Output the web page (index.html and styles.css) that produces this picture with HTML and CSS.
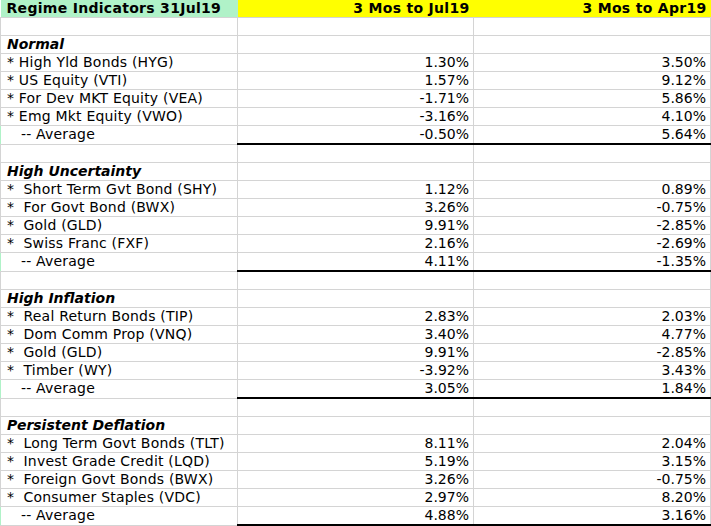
FILE: index.html
```html
<!DOCTYPE html>
<html>
<head>
<meta charset="utf-8">
<link rel="stylesheet" href="styles.css">
</head>
<body>
<table class="sheet">
<colgroup><col class="c1"><col class="c2"><col class="c3"></colgroup>
<tr class="head"><td class="h1">Regime Indicators 31Jul19</td><td class="h2 num">3 Mos to Jul19</td><td class="h2 num">3 Mos to Apr19</td></tr>
<tr><td></td><td></td><td></td></tr>
<tr><td class="grp">Normal</td><td></td><td></td></tr>
<tr><td class="lbl">* High Yld Bonds (HYG)</td><td class="num">1.30%</td><td class="num">3.50%</td></tr>
<tr><td class="lbl">* US Equity (VTI)</td><td class="num">1.57%</td><td class="num">9.12%</td></tr>
<tr><td class="lbl">* For Dev MKT Equity (VEA)</td><td class="num">-1.71%</td><td class="num">5.86%</td></tr>
<tr><td class="lbl">* Emg Mkt Equity (VWO)</td><td class="num">-3.16%</td><td class="num">4.10%</td></tr>
<tr class="avg"><td class="lbl">   -- Average</td><td class="num">-0.50%</td><td class="num">5.64%</td></tr>
<tr><td></td><td></td><td></td></tr>
<tr><td class="grp">High Uncertainty</td><td></td><td></td></tr>
<tr><td class="lbl">*  Short Term Gvt Bond (SHY)</td><td class="num">1.12%</td><td class="num">0.89%</td></tr>
<tr><td class="lbl">*  For Govt Bond (BWX)</td><td class="num">3.26%</td><td class="num">-0.75%</td></tr>
<tr><td class="lbl">*  Gold (GLD)</td><td class="num">9.91%</td><td class="num">-2.85%</td></tr>
<tr><td class="lbl">*  Swiss Franc (FXF)</td><td class="num">2.16%</td><td class="num">-2.69%</td></tr>
<tr class="avg"><td class="lbl">   -- Average</td><td class="num">4.11%</td><td class="num">-1.35%</td></tr>
<tr><td></td><td></td><td></td></tr>
<tr><td class="grp">High Inflation</td><td></td><td></td></tr>
<tr><td class="lbl">*  Real Return Bonds (TIP)</td><td class="num">2.83%</td><td class="num">2.03%</td></tr>
<tr><td class="lbl">*  Dom Comm Prop (VNQ)</td><td class="num">3.40%</td><td class="num">4.77%</td></tr>
<tr><td class="lbl">*  Gold (GLD)</td><td class="num">9.91%</td><td class="num">-2.85%</td></tr>
<tr><td class="lbl">*  Timber (WY)</td><td class="num">-3.92%</td><td class="num">3.43%</td></tr>
<tr class="avg"><td class="lbl">   -- Average</td><td class="num">3.05%</td><td class="num">1.84%</td></tr>
<tr><td></td><td></td><td></td></tr>
<tr><td class="grp">Persistent Deflation</td><td></td><td></td></tr>
<tr><td class="lbl">*  Long Term Govt Bonds (TLT)</td><td class="num">8.11%</td><td class="num">2.04%</td></tr>
<tr><td class="lbl">*  Invest Grade Credit (LQD)</td><td class="num">5.19%</td><td class="num">3.15%</td></tr>
<tr><td class="lbl">*  Foreign Govt Bonds (BWX)</td><td class="num">3.26%</td><td class="num">-0.75%</td></tr>
<tr><td class="lbl">*  Consumer Staples (VDC)</td><td class="num">2.97%</td><td class="num">8.20%</td></tr>
<tr class="avg"><td class="lbl">   -- Average</td><td class="num">4.88%</td><td class="num">3.16%</td></tr>
</table>
</body>
</html>
```
FILE: styles.css
```css
html, body {
  margin: 0;
  padding: 0;
  background: #ffffff;
}
.sheet {
  border-collapse: collapse;
  table-layout: fixed;
  width: 710px;
  font-family: "DejaVu Sans", Verdana, sans-serif;
  font-size: 14px;
  color: #000000;
}
.c1 { width: 237px; }
.c2 { width: 236px; }
.c3 { width: 237px; }
.sheet td {
  height: 17px;
  padding: 0 6px;
  line-height: 17px;
  border: 1px solid #d4d4d4;
  white-space: pre;
  overflow: hidden;
}
.sheet td.lbl {
  letter-spacing: 0.2px;
}
.sheet td.num {
  padding-right: 4px;
}
.head td {
  font-weight: bold;
  letter-spacing: 0.3px;
  border-top: none;
  border-left: none;
  border-right: none;
}
.head .h1 {
  background: #b0f2c8;
}
.head .h2 {
  background: #ffff00;
}
.num {
  text-align: right;
}
.grp {
  font-weight: bold;
  font-style: italic;
}
.avg td.num {
  border-top: 1px solid #000000;
  border-bottom: 2px solid #000000;
}
.avg td:first-child {
  border-left-color: #b0f2c8;
}
```
